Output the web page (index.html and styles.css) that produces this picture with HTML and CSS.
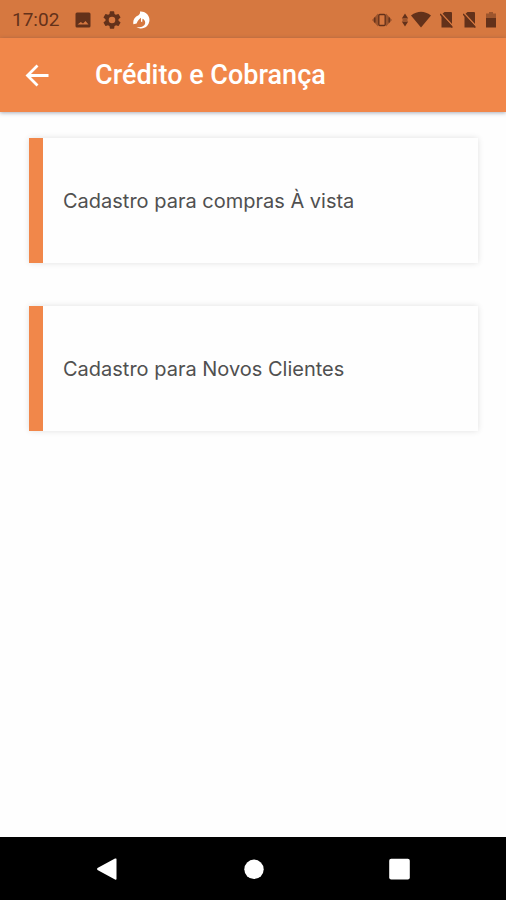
FILE: index.html
```html
<!DOCTYPE html>
<html lang="pt-BR">
<head>
<meta charset="utf-8">
<meta name="viewport" content="width=device-width, initial-scale=1">
<title>Crédito e Cobrança</title>
<link rel="stylesheet" href="styles.css">
</head>
<body>
<div class="status">
  <time class="clock">17:02</time>
  <div class="notices">
    <svg class="icon" viewBox="0 0 20 20" aria-hidden="true"><path fill-rule="evenodd" d="M4 2.500h12a1.500 1.500 0 0 1 1.500 1.500v12a1.500 1.500 0 0 1-1.500 1.500H4A1.500 1.500 0 0 1 2.500 16V4A1.500 1.500 0 0 1 4 2.500zM4.500 14.500h11L12.500 11l-2.500 2.600-2.200-1.700z"/></svg>
    <svg class="icon" viewBox="1 1 22 22" aria-hidden="true"><path d="M19.140 12.940c.04-.3.060-.61.060-.94s-.02-.64-.07-.94l2.030-1.580a.49.49 0 0 0 .12-.61l-1.920-3.320a.49.49 0 0 0-.59-.22l-2.390.96a7 7 0 0 0-1.620-.94l-.36-2.540a.48.48 0 0 0-.48-.41h-3.840a.47.47 0 0 0-.47.410l-.36 2.540c-.59.240-1.130.57-1.620.94l-2.390-.96a.47.47 0 0 0-.59.220L2.740 8.870a.47.47 0 0 0 .12.610l2.030 1.580a6 6 0 0 0 0 1.880l-2.030 1.580a.49.49 0 0 0-.12.610l1.920 3.320c.12.220.37.290.59.220l2.390-.96c.5.380 1.030.7 1.620.94l.36 2.540c.05.240.24.410.48.410h3.840c.24 0 .44-.17.470-.41l.36-2.540a7 7 0 0 0 1.620-.94l2.390.96c.22.080.47 0 .59-.22l1.920-3.320a.47.47 0 0 0-.12-.61zM12 15.600a3.600 3.600 0 1 1 0-7.200 3.600 3.600 0 0 1 0 7.200z"/></svg>
    <svg class="icon light" viewBox="0 0 20 20" aria-hidden="true"><path d="M9 1.500a8.500 8.500 0 1 1-3.500 15.700c5 .4 8.600-1.300 8.700-4.500 0-2-1.200-3.300-2.700-3.900l-.3 3.500-1.200-.9V7.800C8.300 9 6.700 10.700 5.600 13.400l-3.200.9C1.600 10.500 3.400 7 7.500 5.200 8.700 4.300 9.300 3 9 1.500z"/></svg>
  </div>
  <div class="signals">
    <svg class="icon" viewBox="0 0 20 20" aria-hidden="true"><path opacity=".5" d="M6 3.500 0 10l6 6.500zM14 3.500 20 10l-6 6.500z"/><path class="line" d="M2.800 7.500v5M17.200 7.500v5"/><rect class="line" x="6.800" y="4.500" width="6.400" height="11" rx="1"/></svg>
    <svg class="icon wifi" viewBox="0 0 30 20" aria-hidden="true"><path d="m4 3.500 3.200 5H.8zM4 16.500l3.200-5H.8zM1.500 9.500h5v1h-5zM10 5.500q10-7.500 20 0L20 17.500z"/></svg>
    <svg class="icon sim" viewBox="0 0 14 20" aria-hidden="true"><path d="M4.500 2H11q1 0 1 1v14.500H1.500V4.500z"/><path class="gap" d="m1 3 12.400 13.500"/><path class="line" d="m0 4 12.400 13.500"/></svg>
    <svg class="icon sim" viewBox="0 0 14 20" aria-hidden="true"><path d="M4.500 2H11q1 0 1 1v14.500H1.500V4.500z"/><path class="gap" d="m1 3 12.400 13.500"/><path class="line" d="m0 4 12.400 13.500"/></svg>
    <svg class="icon battery" viewBox="0 0 10 20" aria-hidden="true"><path opacity=".5" d="M3 2h4v1.500h3V8H0V3.500h3z"/><path d="M0 8h10v9.500H0z"/></svg>
  </div>
</div>
<header class="appbar">
  <button class="back" type="button" aria-label="Voltar">
    <svg viewBox="0 0 24 24" aria-hidden="true"><path d="M23.500 12.500H3M12.500 2.500l-10 10 10 10" fill="none" stroke="#fff" stroke-width="2.800"/></svg>
  </button>
  <h1>Crédito e Cobrança</h1>
</header>
<main class="options">
  <a class="card" href="#vista">Cadastro para compras À vista</a>
  <a class="card" href="#novos">Cadastro para Novos Clientes</a>
</main>
<nav class="navbar">
  <button type="button" aria-label="Voltar"><svg viewBox="0 0 22 22" aria-hidden="true"><path d="M20.500.8v20.400q-.5.800-1.500.2L1.500 12q-1-1 0-2L19 .6q1-.5 1.500.2z"/></svg></button>
  <button type="button" aria-label="Início"><svg viewBox="0 0 22 22" aria-hidden="true"><circle cx="12" cy="11.300" r="9.700"/></svg></button>
  <button type="button" aria-label="Recentes"><svg viewBox="0 0 22 22" aria-hidden="true"><rect x="1.200" y=".7" width="20.600" height="20.800" rx="2"/></svg></button>
</nav>
</body>
</html>
```
FILE: styles.css
```css
* { box-sizing: border-box; }

body {
  margin: 0;
  min-height: 100vh;
  display: flex;
  flex-direction: column;
  background: #fefefe;
  font-family: Roboto, sans-serif;
}

button {
  border: 0;
  padding: 0;
  background: none;
  display: flex;
  align-items: center;
  justify-content: center;
}

.status {
  display: flex;
  align-items: center;
  height: 38px;
  padding: 2px 10px 0 12px;
  background: #d67840;
  color: #63311a;
}

.clock {
  font-size: 19px;
  line-height: 24px;
}

.notices {
  display: flex;
  gap: 9px;
  margin-left: 14px;
}

.signals {
  display: flex;
  gap: 9px;
  margin-left: auto;
}

.icon {
  width: 20px;
  height: 20px;
  fill: #63311a;
}

.icon .line {
  fill: none;
  stroke: #63311a;
  stroke-width: 1.4;
}

.icon .gap {
  fill: none;
  stroke: #d67840;
  stroke-width: 1.4;
}

.icon.light { fill: #fff; }
.icon.wifi { width: 30px; }
.icon.sim { width: 14px; }
.icon.battery { width: 10px; }

.appbar {
  display: flex;
  align-items: center;
  gap: 46px;
  height: 74px;
  padding: 0 25px;
  background: #f1874a;
  box-shadow: 0 1px 4px rgba(40, 50, 80, 0.4);
}

.back svg {
  width: 24px;
  height: 24px;
}

h1 {
  margin: 0;
  color: #fff;
  font-size: 27px;
  font-weight: 500;
  line-height: 32px;
}

.options {
  flex: 1;
  display: flex;
  flex-direction: column;
  gap: 43px;
  padding: 26px 28px 26px 29px;
}

.card {
  display: flex;
  align-items: center;
  height: 125px;
  padding-left: 20px;
  border-left: 14px solid #f1874a;
  background: #fefefe;
  box-shadow: 0 0 6px rgba(0, 0, 0, 0.12);
  color: #505050;
  font-family: Inter, sans-serif;
  font-size: 20px;
  font-weight: 400;
  line-height: 28px;
  text-decoration: none;
}

.navbar {
  display: flex;
  align-items: center;
  justify-content: space-around;
  height: 63px;
  padding: 0 34px;
  background: #000;
}

.navbar svg {
  width: 22px;
  height: 22px;
  fill: #fff;
}
```
